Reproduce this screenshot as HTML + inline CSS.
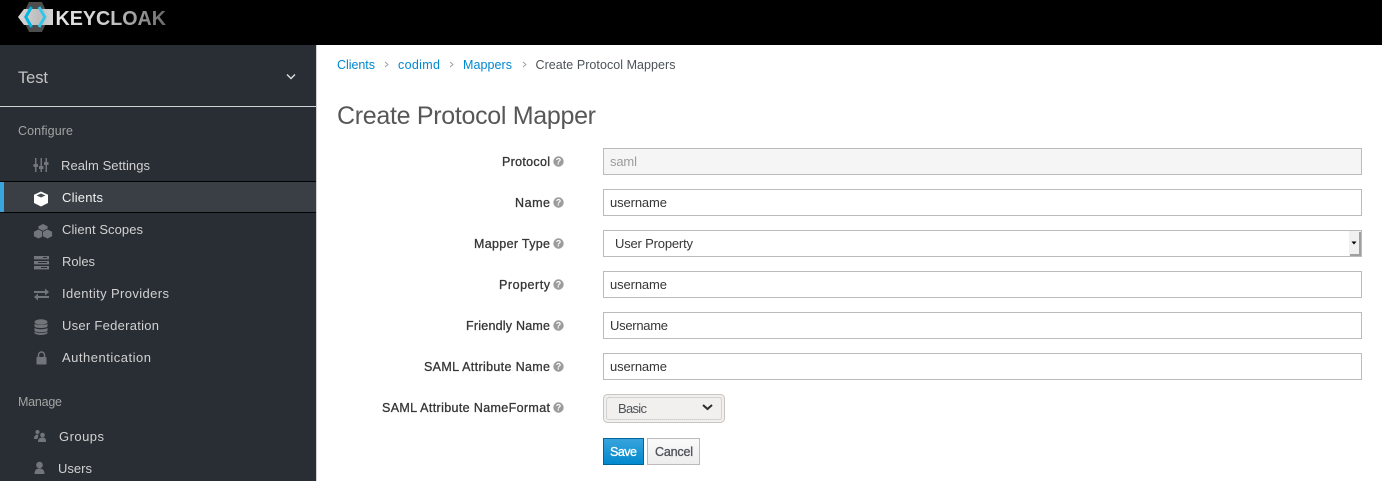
<!DOCTYPE html>
<html><head><meta charset="utf-8"><title>Keycloak</title>
<style>
html,body{margin:0;padding:0;background:#fff;width:1382px;height:481px;overflow:hidden}
svg{display:block;position:absolute;left:0;top:0}
text{font-family:"Liberation Sans",sans-serif;font-size:13px}
.n{fill:#d1d1d1}
.h{fill:#a3a3a3;font-size:12.5px}
.l{fill:#363636;font-size:12.5px;stroke:#363636;stroke-width:.3px}
.v{fill:#363636}
.a{fill:#0088ce}
</style></head><body>
<svg width="1382" height="481" viewBox="0 0 1382 481" xmlns="http://www.w3.org/2000/svg">
<defs>
<linearGradient id="kg" x1="0" x2="1" y1="0" y2="0"><stop offset="0" stop-color="#e6e6e6"/><stop offset=".45" stop-color="#d0d0d0"/><stop offset="1" stop-color="#6a6a6a"/></linearGradient>
<linearGradient id="bd" x1="0" x2="1" y1="0" y2="0"><stop offset="0" stop-color="#d8d8d8"/><stop offset=".6" stop-color="#bdbdbd"/><stop offset="1" stop-color="#d4d4d4"/></linearGradient>
<linearGradient id="sv" x1="0" x2="0" y1="0" y2="1"><stop offset="0" stop-color="#39a5dc"/><stop offset="1" stop-color="#0088ce"/></linearGradient>
<linearGradient id="cn" x1="0" x2="0" y1="0" y2="1"><stop offset="0" stop-color="#fafafa"/><stop offset="1" stop-color="#ededed"/></linearGradient>
<g id="q"><circle cx="0" cy="0" r="5.200" fill="#9c9c9c"/><text x="0" y="3.200" text-anchor="middle" style="font-size:9px;font-weight:bold;fill:#fff">?</text></g>
</defs>

<!-- Top bar -->
<rect width="1382" height="45" fill="#000"/>
<polygon points="29,2 42,2 49,17 42,32 29,32 22,17" fill="#4d4d4d"/>
<polygon points="18,17 24,9 53,9 53,25 24,25" fill="url(#bd)"/>
<path d="M31.500 7 L25.800 17 L31.500 27" fill="none" stroke="#00b8e3" stroke-width="3"/>
<path d="M39 7 L44.800 17 L39 27" fill="none" stroke="#33c6e9" stroke-width="3"/>
<text x="55.500" y="25" textLength="110.500" lengthAdjust="spacingAndGlyphs" style="font-size:20.500px;font-weight:bold;fill:url(#kg)">KEYCLOAK</text>

<!-- Sidebar -->
<rect x="0" y="45" width="316" height="436" fill="#292e34"/>
<rect x="316" y="45" width="1" height="436" fill="#d1d1d1"/>
<text x="18" y="83" textLength="30" style="font-size:16.500px;fill:#c4c4c4">Test</text>
<path d="M287 74.500 L291 78.500 L295 74.500" fill="none" stroke="#e0e0e0" stroke-width="1.400"/>
<rect x="0" y="106" width="316" height="1" fill="#d1d1d1"/>

<text x="18" y="135" textLength="55" class="h">Configure</text>
<text x="61" y="170" textLength="89" class="n">Realm Settings</text>
<g fill="#72767b">
<rect x="35" y="158" width="1.500" height="14"/><rect x="33.500" y="164" width="4.500" height="3"/>
<rect x="40.500" y="158" width="1.500" height="14"/><rect x="39" y="166" width="4.500" height="3"/>
<rect x="45.500" y="158" width="1.500" height="14"/><rect x="44" y="162" width="4.500" height="3"/>
</g>

<rect x="0" y="181" width="316" height="1" fill="#030303"/>
<rect x="0" y="182" width="316" height="30" fill="#393f44"/>
<rect x="0" y="212" width="316" height="1" fill="#030303"/>
<rect x="0" y="182" width="4" height="30" fill="#39a5dc"/>
<polygon points="41,191.500 48,194.800 48,203 41,206.500 34,203 34,194.800" fill="#fff"/>
<polygon points="41,193.500 45.500,195.500 41,197.500 36.500,195.500" fill="#4a4f54"/>
<text x="62" y="202" textLength="41" style="fill:#f0f0f0">Clients</text>

<text x="62" y="234" textLength="81" class="n">Client Scopes</text>
<g fill="#72767b" stroke="#292e34" stroke-width=".8">
<polygon points="43,223.500 48,226 48,231 43,233.500 38,231 38,226"/>
<polygon points="38.500,229 43.500,231.500 43.500,236.500 38.500,239 33.500,236.500 33.500,231.500"/>
<polygon points="47.500,229 52.500,231.500 52.500,236.500 47.500,239 42.500,236.500 42.500,231.500"/>
</g>

<text x="62" y="266" textLength="33" class="n">Roles</text>
<g fill="#72767b">
<rect x="34" y="256" width="15" height="3.400"/><rect x="34" y="261" width="15" height="3.400"/><rect x="34" y="266" width="15" height="3.400"/>
</g>
<g fill="#292e34"><rect x="43" y="257" width="4" height="1"/><rect x="38" y="262" width="9" height="1"/><rect x="41" y="267" width="6" height="1"/></g>

<text x="62" y="298" textLength="107" class="n">Identity Providers</text>
<g fill="#72767b">
<rect x="34" y="291" width="12" height="2"/><polygon points="45,288.500 49,292 45,295.500"/>
<rect x="37" y="296" width="12" height="2"/><polygon points="38,293.500 34,297 38,300.500"/>
</g>

<text x="62" y="330" textLength="97" class="n">User Federation</text>
<g fill="#72767b">
<ellipse cx="41" cy="322" rx="6.500" ry="2.700"/>
<path d="M34.500 323.500c1 2 12 2 13 0v3c-1 2-12 2-13 0z"/>
<path d="M34.500 327.700c1 2 12 2 13 0v3c-1 2-12 2-13 0z"/>
<path d="M34.500 331.500c1 2 12 2 13 0v1.500c-1 2.500-12 2.500-13 0z"/>
</g>

<text x="62" y="362" textLength="89" class="n">Authentication</text>
<g fill="#72767b">
<rect x="36.500" y="357" width="10" height="7.500" rx=".8"/>
<path d="M38.500 357v-2a3 3 0 0 1 6 0v2" fill="none" stroke="#72767b" stroke-width="1.500"/>
</g>

<text x="18" y="406" textLength="44" class="h">Manage</text>
<text x="59" y="441" textLength="45" class="n">Groups</text>
<g fill="#72767b">
<circle cx="37.500" cy="432" r="2"/><circle cx="42.500" cy="435" r="2.300"/>
<path d="M34 439c0-3 1.500-4.500 3.500-4.500l1 .5-1 4z"/><path d="M38 442c0-3.500 2-4.500 4.500-4.500s3.500 1 3.500 4.500z"/>
</g>
<text x="58" y="473" textLength="34" class="n">Users</text>
<g fill="#72767b">
<circle cx="39.500" cy="465" r="3.300"/><path d="M34.500 474c0-4 2-5.500 5-5.500s5 1.500 5 5.500z"/>
</g>

<!-- Breadcrumb -->
<text x="337" y="69" textLength="38" class="a" style="font-size:12.500px">Clients</text>
<text x="398" y="69" textLength="42" class="a" style="font-size:12.500px">codimd</text>
<text x="463" y="69" textLength="49" class="a" style="font-size:12.500px">Mappers</text>
<text x="535.500" y="69" textLength="140" style="font-size:12.500px;fill:#4d5258">Create Protocol Mappers</text>
<g fill="none" stroke="#9c9c9c" stroke-width=".9">
<path d="M385 62l3 2.500-3 2.500"/><path d="M450 62l3 2.500-3 2.500"/><path d="M523 62l3 2.500-3 2.500"/>
</g>

<text x="337" y="124" textLength="259" style="font-size:25px;fill:#575757">Create Protocol Mapper</text>

<!-- Labels -->
<text x="502" y="166" textLength="48" class="l">Protocol</text><use href="#q" x="558.500" y="161.500"/>
<text x="515" y="207" textLength="35" class="l">Name</text><use href="#q" x="558.500" y="202.500"/>
<text x="474" y="248" textLength="76" class="l">Mapper Type</text><use href="#q" x="558.500" y="243.500"/>
<text x="499" y="289" textLength="51" class="l">Property</text><use href="#q" x="558.500" y="284.500"/>
<text x="466" y="330" textLength="84" class="l">Friendly Name</text><use href="#q" x="558.500" y="325.500"/>
<text x="424" y="371" textLength="126" class="l">SAML Attribute Name</text><use href="#q" x="558.500" y="366.500"/>
<text x="382" y="412" textLength="168" class="l">SAML Attribute NameFormat</text><use href="#q" x="558.500" y="407.500"/>

<!-- Inputs -->
<rect x="603.500" y="148.500" width="758" height="26" fill="#f5f5f5" stroke="#bbb"/>
<text x="610" y="166" textLength="27" style="fill:#9c9c9c">saml</text>
<rect x="603.500" y="189.500" width="758" height="26" fill="#fff" stroke="#bbb"/>
<text x="610" y="207" textLength="57" class="v">username</text>
<rect x="603.500" y="230.500" width="758" height="26" fill="#fff" stroke="#bbb"/>
<text x="615" y="248" textLength="78" class="v">User Property</text>
<rect x="1349" y="231" width="12" height="25" fill="#f0f0f0"/>
<rect x="1359" y="232" width="2" height="24" fill="#a0a0a0"/>
<rect x="1350" y="254" width="11" height="2" fill="#a0a0a0"/>
<polygon points="1351.500,241.500 1356.500,241.500 1354,244.500" fill="#000"/>
<rect x="603.500" y="271.500" width="758" height="26" fill="#fff" stroke="#bbb"/>
<text x="610" y="289" textLength="57" class="v">username</text>
<rect x="603.500" y="312.500" width="758" height="26" fill="#fff" stroke="#bbb"/>
<text x="610" y="330" textLength="58" class="v">Username</text>
<rect x="603.500" y="353.500" width="758" height="26" fill="#fff" stroke="#bbb"/>
<text x="610" y="371" textLength="57" class="v">username</text>

<!-- NameFormat select -->
<rect x="603.500" y="394.500" width="121" height="28" rx="4" fill="#f1f0ee" stroke="#c9c4bd"/>
<rect x="606.500" y="397.500" width="115" height="22" rx="2" fill="#f1f0ee" stroke="#b4b4b4" stroke-dasharray="1 1"/>
<text x="618" y="413" textLength="29" style="fill:#4d5258">Basic</text>
<path d="M703 405l4.500 4 4.500-4" fill="none" stroke="#2e2e2e" stroke-width="2"/>

<!-- Buttons -->
<rect x="603.500" y="438.500" width="40" height="26" fill="url(#sv)" stroke="#00659c"/>
<text x="610" y="456" textLength="27" style="fill:#fff;stroke:#fff;stroke-width:.3px;font-size:12.500px">Save</text>
<rect x="647.500" y="438.500" width="52" height="26" fill="url(#cn)" stroke="#bbb"/>
<text x="655" y="456" textLength="38" style="fill:#4d5258;stroke:#4d5258;stroke-width:.3px;font-size:12.500px">Cancel</text>
</svg>
</body></html>
